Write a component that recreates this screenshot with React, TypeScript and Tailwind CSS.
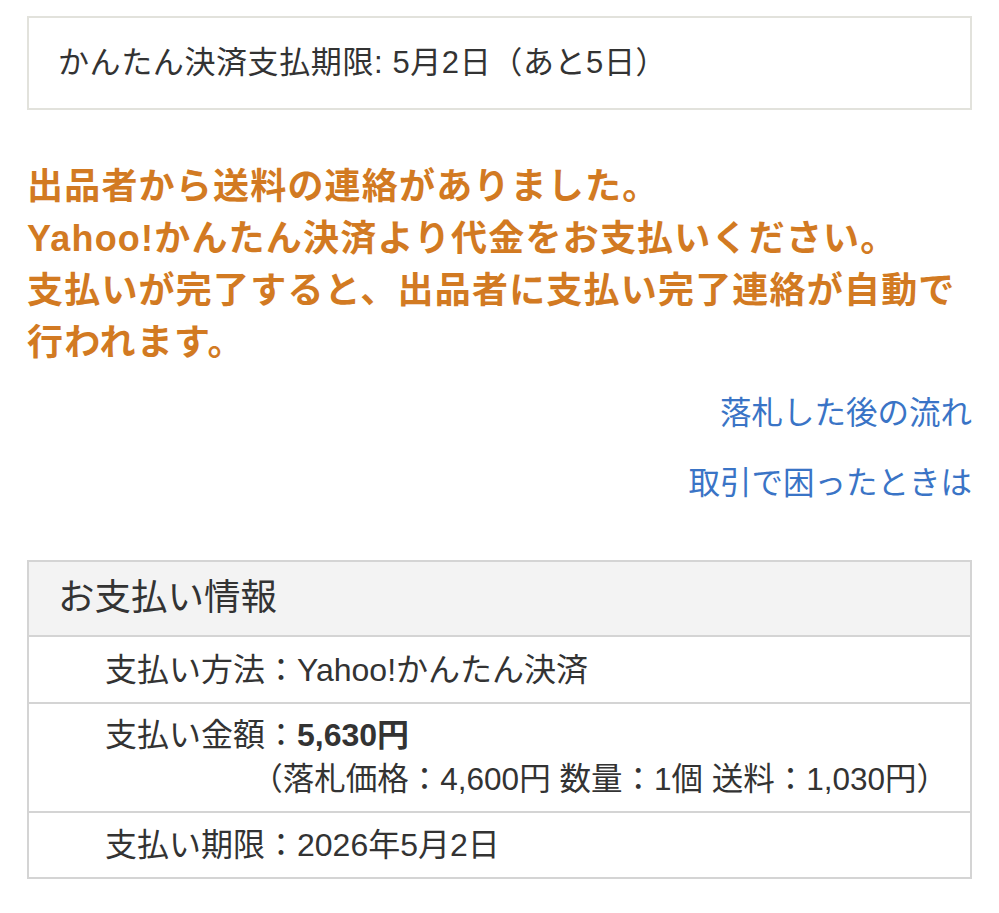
import React from 'react';

const font = { fontFamily: '"Liberation Sans", "Noto Sans CJK JP", sans-serif' };

const PaymentRow = ({ children, className = '' }: { children: React.ReactNode; className?: string }) => (
    <div className={`border-t-2 border-[#d4d4d4] pl-[76px] pr-[22px] text-[32px] text-[#333333] ${className}`}>{children}</div>
);

const App = () => {
    return (
        <div className="min-h-[913px] bg-white px-[27px] pt-[16px]" style={font}>
            {/* deadline box */}
            <div className="flex h-[94px] items-center border-2 border-[#e2e2dc] pl-[29px] text-[31px] tracking-[0.6px] text-[#333333]">
                かんたん決済支払期限: 5月2日（あと5日）
            </div>

            {/* notice */}
            <p className="mt-[51px] text-[36px] font-bold leading-[52px] tracking-[1.2px] text-[#d27a22]">
                出品者から送料の連絡がありました。
                <br />
                Yahoo!かんたん決済より代金をお支払いください。
                <br />
                支払いが完了すると、出品者に支払い完了連絡が自動で
                <br />
                行われます。
            </p>

            {/* links */}
            <div className="mt-[24px] flex flex-col items-end gap-[30px] text-[31.5px] leading-[40px] text-[#3a74c6]">
                <a href="#">落札した後の流れ</a>
                <a href="#">取引で困ったときは</a>
            </div>

            {/* payment info */}
            <div className="mt-[57px] border-2 border-t-0 border-[#d4d4d4]">
                <div className="flex h-[75px] items-center border-t-2 border-[#d4d4d4] bg-[#f3f3f3] pl-[29px] text-[36.5px] text-[#333333]">
                    お支払い情報
                </div>
                <PaymentRow className="flex h-[67px] items-center">支払い方法：Yahoo!かんたん決済</PaymentRow>
                <PaymentRow className="pb-[10px] pt-[9px] leading-[44px]">
                    <div>
                        支払い金額：<span className="font-bold">5,630円</span>
                    </div>
                    <div className="text-right text-[31.5px]">（落札価格：4,600円 数量：1個 送料：1,030円）</div>
                </PaymentRow>
                <PaymentRow className="flex h-[66px] items-center">支払い期限：2026年5月2日</PaymentRow>
            </div>
        </div>
    );
};

export default App;
